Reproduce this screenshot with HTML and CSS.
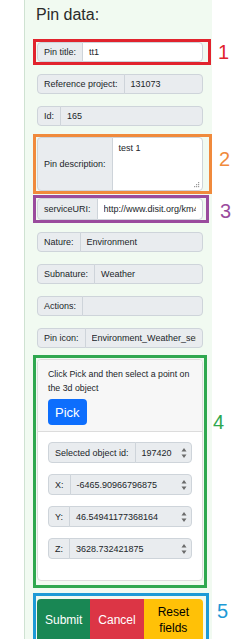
FILE: index.html
```html
<!DOCTYPE html>
<html lang="en">
<head>
<meta charset="utf-8">
<title>Pin data</title>
<link rel="stylesheet" href="styles.css">
</head>
<body>
<div class="panel">
  <h2 class="title">Pin data:</h2>

  <div class="anno anno-red row-first">
    <div class="group">
      <span class="lbl">Pin title:</span>
      <span class="val val-white">tt1</span>
    </div>
    <span class="num num-red">1</span>
  </div>

  <div class="group row">
    <span class="lbl">Reference project:</span>
    <span class="val">131073</span>
  </div>

  <div class="group row">
    <span class="lbl">Id:</span>
    <span class="val">165</span>
  </div>

  <div class="anno anno-orange row-desc">
    <div class="group group-tall">
      <span class="lbl">Pin description:</span>
      <span class="val val-white val-area">test 1
        <svg class="grip" width="6" height="6" viewBox="0 0 6 6"><g fill="#9a9a9a"><rect x="4" y="0" width="1.2" height="1.2"/><rect x="2" y="2" width="1.2" height="1.2"/><rect x="4" y="2" width="1.2" height="1.2"/><rect x="0" y="4" width="1.2" height="1.2"/><rect x="2" y="4" width="1.2" height="1.2"/><rect x="4" y="4" width="1.2" height="1.2"/></g></svg>
      </span>
    </div>
    <span class="num num-orange">2</span>
  </div>

  <div class="anno anno-purple row-url">
    <div class="group group-url">
      <span class="lbl">serviceURI:</span>
      <span class="val val-white"><span class="clip">http://www.disit.org/km4</span></span>
    </div>
    <span class="num num-purple">3</span>
  </div>

  <div class="group row">
    <span class="lbl">Nature:</span>
    <span class="val">Environment</span>
  </div>

  <div class="group row">
    <span class="lbl">Subnature:</span>
    <span class="val">Weather</span>
  </div>

  <div class="group row">
    <span class="lbl">Actions:</span>
    <span class="val"></span>
  </div>

  <div class="group row">
    <span class="lbl">Pin icon:</span>
    <span class="val"><span class="clip">Environment_Weather_sens</span></span>
  </div>

  <div class="anno anno-green row-card">
    <div class="card">
      <div class="card-head">
        <p class="hint">Click Pick and then select a point on the 3d object</p>
        <button class="pick" type="button">Pick</button>
      </div>
      <div class="card-body">
        <div class="group group-num">
          <span class="lbl">Selected object id:</span>
          <span class="val">197420<svg class="spin" width="8" height="14" viewBox="0 0 8 14"><path d="M1.5 5.5 L4 2 L6.5 5.5 Z M1.5 8.5 L4 12 L6.5 8.5 Z" fill="#6b6b6b"/></svg></span>
        </div>
        <div class="group group-num">
          <span class="lbl">X:</span>
          <span class="val">-6465.90966796875<svg class="spin" width="8" height="14" viewBox="0 0 8 14"><path d="M1.5 5.5 L4 2 L6.5 5.5 Z M1.5 8.5 L4 12 L6.5 8.5 Z" fill="#6b6b6b"/></svg></span>
        </div>
        <div class="group group-num">
          <span class="lbl">Y:</span>
          <span class="val">46.54941177368164<svg class="spin" width="8" height="14" viewBox="0 0 8 14"><path d="M1.5 5.5 L4 2 L6.5 5.5 Z M1.5 8.5 L4 12 L6.5 8.5 Z" fill="#6b6b6b"/></svg></span>
        </div>
        <div class="group group-num">
          <span class="lbl">Z:</span>
          <span class="val">3628.732421875<svg class="spin" width="8" height="14" viewBox="0 0 8 14"><path d="M1.5 5.5 L4 2 L6.5 5.5 Z M1.5 8.5 L4 12 L6.5 8.5 Z" fill="#6b6b6b"/></svg></span>
        </div>
      </div>
    </div>
    <span class="num num-green">4</span>
  </div>

  <div class="anno anno-blue row-btns">
    <div class="btns">
      <button class="btn btn-submit" type="button">Submit</button>
      <button class="btn btn-cancel" type="button">Cancel</button>
      <button class="btn btn-reset" type="button">Reset fields</button>
    </div>
    <span class="num num-blue">5</span>
  </div>
</div>
</body>
</html>
```

FILE: styles.css
```css
* { box-sizing: border-box; }

html, body {
  margin: 0;
  padding: 0;
  background: #ffffff;
  height: 100%;
  overflow: hidden;
}

body {
  font-family: "Liberation Sans", Arial, sans-serif;
  font-size: 9px;
  color: #212529;
}

.panel {
  margin-left: 24px;
  width: 188px;
  min-height: 100%;
  background: #f1faf1;
  border-left: 1px solid #cfe2d2;
  padding: 0 9px 0 12px;
  display: flex;
  flex-direction: column;
}

.title {
  margin: 5px 0 0 -1px;
  height: 20px;
  font-size: 16px;
  line-height: 20px;
  font-weight: normal;
  color: #2a2a2a;
}

/* input groups */
.group {
  display: flex;
  height: 20px;
}

.lbl {
  display: flex;
  align-items: center;
  padding: 0 6px;
  background: #e9ecef;
  border: 1px solid #ced4da;
  border-radius: 4px 0 0 4px;
  white-space: nowrap;
  flex: 0 0 auto;
}

.val {
  flex: 1 1 auto;
  min-width: 0;
  display: flex;
  align-items: center;
  padding: 0 6px;
  margin-left: -1px;
  background: #e9ecef;
  border: 1px solid #ced4da;
  border-radius: 0 4px 4px 0;
  white-space: nowrap;
  overflow: hidden;
}

.clip {
  display: block;
  min-width: 0;
  overflow: hidden;
  white-space: nowrap;
}

.val-white { background: #ffffff; }

.row { margin-top: 12px; }
.row-first { margin-top: 17px; }
.row-desc { margin-top: 11px; }
.row-url { margin-top: 7px; }
.row-card { margin-top: 11px; }
.row-btns { margin-top: 18px; }
.row-url + .row { margin-top: 12px; }

.group-tall { height: 54px; }
.val-area {
  position: relative;
  align-items: flex-start;
  padding-top: 5px;
}
.grip {
  position: absolute;
  right: 2px;
  bottom: 2px;
}

.group-url { height: 22px; }

/* annotation overlays */
.anno { position: relative; }
.anno::after {
  content: "";
  position: absolute;
  pointer-events: none;
  border: 3px solid transparent;
}
.anno-red::after { top: -3px; right: -8px; bottom: -3px; left: -4px; border-color: #e1232d; }
.anno-orange::after { top: -3px; right: -9px; bottom: -3px; left: -4px; border-color: #f08a3c; }
.anno-purple::after { top: -3px; right: -6px; bottom: -3px; left: -4px; border-color: #9a4b9d; }
.anno-green::after { top: -4px; right: -4px; bottom: -7px; left: -4px; border-color: #2fa84f; }
.anno-blue::after { top: -6px; right: -6px; bottom: -12px; left: -4px; border-color: #1d9ad6; }

.num {
  position: absolute;
  font-family: "Liberation Sans", Arial, sans-serif;
  font-size: 20px;
  line-height: 20px;
}
.num-red { top: 0; left: 181px; color: #e1232d; }
.num-orange { top: 12px; left: 182px; color: #f08a3c; }
.num-purple { top: 3px; left: 183px; color: #9a4b9d; }
.num-green { top: 53px; left: 176px; color: #2fa84f; }
.num-blue { top: 2px; left: 180px; color: #1d9ad6; }

/* card */
.card {
  background: #ffffff;
  border: 1px solid #dcdcdc;
  border-radius: 4px;
  overflow: hidden;
}

.card-head {
  background: #f7f7f7;
  border-bottom: 1px solid #dcdcdc;
  padding: 7px 10px 6px;
}

.hint {
  margin: 0;
  font-size: 8.8px;
  line-height: 14px;
}

.pick {
  display: block;
  margin-top: 4px;
  height: 26px;
  padding: 0 7px;
  border: none;
  border-radius: 4px;
  background: #0d6efd;
  color: #ffffff;
  font-family: "Liberation Sans", Arial, sans-serif;
  font-size: 13px;
}

.card-body {
  padding: 10px 10px 21px;
  display: flex;
  flex-direction: column;
  gap: 11px;
}

.group-num { height: 21px; }
.group-num .val { justify-content: space-between; padding-right: 3px; }
.spin { flex: 0 0 auto; }

/* buttons */
.btns {
  display: flex;
  border-radius: 4px 4px 0 0;
  overflow: hidden;
}

.btn {
  border: none;
  margin: 0;
  font-family: "Liberation Sans", Arial, sans-serif;
  font-size: 12px;
  line-height: 16px;
  padding: 5px 8px;
  height: 42px;
}
.btn-submit { background: #198754; color: #ffffff; flex: 0 0 53px; }
.btn-cancel { background: #dc3545; color: #ffffff; flex: 0 0 51px; }
.btn-reset { background: #ffc107; color: #000000; flex: 1 1 auto; padding: 5px 10px; }
```
